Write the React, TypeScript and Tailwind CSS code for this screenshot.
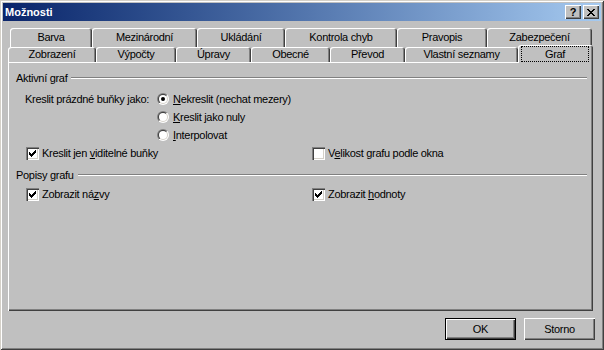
import { FC } from 'react';

const raised =
  'shadow-[inset_1px_1px_0_#ffffff,inset_-1px_-1px_0_#404040,inset_-2px_-2px_0_#808080]';

const row1 = [
  { label: 'Barva', w: 'w-[82px]' },
  { label: 'Mezinárodní', w: 'w-[105px]' },
  { label: 'Ukládání', w: 'w-[88px]' },
  { label: 'Kontrola chyb', w: 'w-[112px]' },
  { label: 'Pravopis', w: 'w-[90px]' },
  { label: 'Zabezpečení', w: 'w-[105px]' },
];

const row2 = [
  { label: 'Zobrazení', w: 'w-[88px]' },
  { label: 'Výpočty', w: 'w-[80px]' },
  { label: 'Úpravy', w: 'w-[75px]' },
  { label: 'Obecné', w: 'w-[79px]' },
  { label: 'Převod', w: 'w-[75px]' },
  { label: 'Vlastní seznamy', w: 'w-[113px]' },
];

const tabCls =
  'h-full flex items-center justify-center rounded-t-[3px] shadow-[inset_1px_1px_0_#ffffff,inset_-1px_0_0_#404040,inset_-2px_0_0_#808080]';

const CheckMark: FC = () => {
  // classic 7x7 pixel tick
  const px = [
    [6, 0], [5, 1], [6, 1], [0, 2], [4, 2], [5, 2], [6, 2],
    [0, 3], [1, 3], [3, 3], [4, 3], [5, 3], [0, 4], [1, 4], [2, 4], [3, 4], [4, 4],
    [1, 5], [2, 5], [3, 5], [2, 6],
  ];
  return (
    <svg width="7" height="7" viewBox="0 0 7 7" shapeRendering="crispEdges">
      {px.map(([x, y]) => (
        <rect key={`${x}-${y}`} x={x} y={y} width="1" height="1" fill="#000" />
      ))}
    </svg>
  );
};

const Checkbox: FC<{ checked?: boolean }> = ({ checked }) => (
  <div className="w-[13px] h-[13px] shrink-0 bg-white flex items-center justify-center shadow-[inset_1px_1px_0_#808080,inset_2px_2px_0_#404040,inset_-1px_-1px_0_#ffffff,inset_-2px_-2px_0_#d4d0c8]">
    {checked && <CheckMark />}
  </div>
);

const Radio: FC<{ checked?: boolean }> = ({ checked }) => (
  <svg width="12" height="12" viewBox="0 0 12 12" className="shrink-0">
    <defs>
      <linearGradient id="ro" x1="0" y1="0" x2="1" y2="1">
        <stop offset="0.5" stopColor="#808080" />
        <stop offset="0.5" stopColor="#ffffff" />
      </linearGradient>
      <linearGradient id="ri" x1="0" y1="0" x2="1" y2="1">
        <stop offset="0.5" stopColor="#404040" />
        <stop offset="0.5" stopColor="#d4d0c8" />
      </linearGradient>
    </defs>
    <circle cx="6" cy="6" r="6" fill="url(#ro)" />
    <circle cx="6" cy="6" r="5" fill="url(#ri)" />
    <circle cx="6" cy="6" r="4" fill="#ffffff" />
    {checked && <circle cx="6" cy="6" r="2" fill="#000" />}
  </svg>
);

const Group: FC<{ title: string }> = ({ title }) => (
  <div className="flex items-center h-[14px]">
    <span>{title}</span>
    <div className="flex-1 ml-[4px] h-[2px] border-t border-t-[#808080] border-b border-b-white" />
  </div>
);

const App: FC = () => {
  return (
    <div className="w-[604px] h-[350px] bg-[#c0c0c0] p-[3px] flex flex-col text-[11px] tracking-[-0.3px] text-black font-['Liberation_Sans',Arial,sans-serif] shadow-[inset_1px_1px_0_#d4d0c8,inset_-1px_-1px_0_#404040,inset_2px_2px_0_#ffffff,inset_-2px_-2px_0_#808080]">
      {/* title bar */}
      <div className="h-[18px] flex items-center justify-between bg-gradient-to-r from-[#0a246a] to-[#a6caf0] pl-[2px] pr-[2px]">
        <span className="text-white font-bold tracking-normal">Možnosti</span>
        <div className="flex gap-[2px]">
          <div className={`w-[16px] h-[14px] bg-[#c0c0c0] flex items-center justify-center font-bold text-[11px] leading-none ${raised}`}>
            ?
          </div>
          <div className={`w-[16px] h-[14px] bg-[#c0c0c0] flex items-center justify-center ${raised}`}>
            <svg width="8" height="7" viewBox="0 0 8 7" shapeRendering="crispEdges">
              <path d="M0 0h2v1h-2zM6 0h2v1h-2zM1 1h2v1h-2zM5 1h2v1h-2zM2 2h4v1h-4zM3 3h2v1h-2zM2 4h4v1h-4zM1 5h2v1h-2zM5 5h2v1h-2zM0 6h2v1h-2zM6 6h2v1h-2z" fill="#000" />
            </svg>
          </div>
        </div>
      </div>

      <div className="flex-1 flex flex-col pl-[5px] pr-[8px]">
        {/* tabs */}
        <div className="mt-[7px] flex h-[19px] pl-[2px]">
          {row1.map((t) => (
            <div key={t.label} className={`${t.w} ${tabCls}`}>
              {t.label}
            </div>
          ))}
        </div>
        <div className="flex h-[15px] items-start">
          {row2.map((t) => (
            <div key={t.label} className={`${t.w} ${tabCls}`}>
              {t.label}
            </div>
          ))}
          <div className="relative z-10 -mt-[2px] w-[75px] h-[18px] bg-[#c0c0c0] rounded-t-[3px] shadow-[inset_1px_1px_0_#ffffff,inset_-1px_0_0_#404040,inset_-2px_0_0_#808080] pl-[3px] pr-[4px] pt-[1px]">
            <div className="h-[16px] border border-dotted border-black flex items-center justify-center">
              Graf
            </div>
          </div>
        </div>

        {/* panel */}
        <div className={`h-[249px] flex flex-col pt-[9px] pl-[8px] pr-[6px] ${raised}`}>
          <Group title="Aktivní graf" />
          <div className="flex flex-col pl-[9px] mt-[5px]">
            <div className="flex items-center h-[18px]">
              <span className="w-[132px]">Kreslit prázdné buňky jako:</span>
              <Radio checked />
              <span className="ml-[4px]">
                <u>N</u>ekreslit (nechat mezery)
              </span>
            </div>
            <div className="flex items-center h-[18px] pl-[132px]">
              <Radio />
              <span className="ml-[4px]">
                <u>K</u>reslit jako nuly
              </span>
            </div>
            <div className="flex items-center h-[18px] pl-[132px]">
              <Radio />
              <span className="ml-[4px]">
                <u>I</u>nterpolovat
              </span>
            </div>
            <div className="grid grid-cols-[286px_1fr] h-[18px] pl-[1px]">
              <div className="flex items-center">
                <Checkbox checked />
                <span className="ml-[3px]">
                  Kreslit jen <u>v</u>iditelné buňky
                </span>
              </div>
              <div className="flex items-center">
                <Checkbox />
                <span className="ml-[3px]">
                  V<u>e</u>likost grafu podle okna
                </span>
              </div>
            </div>
          </div>

          <div className="mt-[6px]">
            <Group title="Popisy grafu" />
          </div>
          <div className="grid grid-cols-[286px_1fr] h-[18px] pl-[10px] mt-[3px]">
            <div className="flex items-center">
              <Checkbox checked />
              <span className="ml-[3px]">
                Zobrazit ná<u>z</u>vy
              </span>
            </div>
            <div className="flex items-center">
              <Checkbox checked />
              <span className="ml-[3px]">
                Zobrazit <u>h</u>odnoty
              </span>
            </div>
          </div>
        </div>

        {/* buttons */}
        <div className="mt-[7px] flex justify-end gap-[8px] -mr-[2px]">
          <div className="w-[71px] h-[22px] flex items-center justify-center border border-black shadow-[inset_1px_1px_0_#ffffff,inset_-1px_-1px_0_#404040,inset_-2px_-2px_0_#808080]">
            OK
          </div>
          <div className={`w-[71px] h-[22px] flex items-center justify-center ${raised}`}>
            Storno
          </div>
        </div>
      </div>
    </div>
  );
};

export default App;
